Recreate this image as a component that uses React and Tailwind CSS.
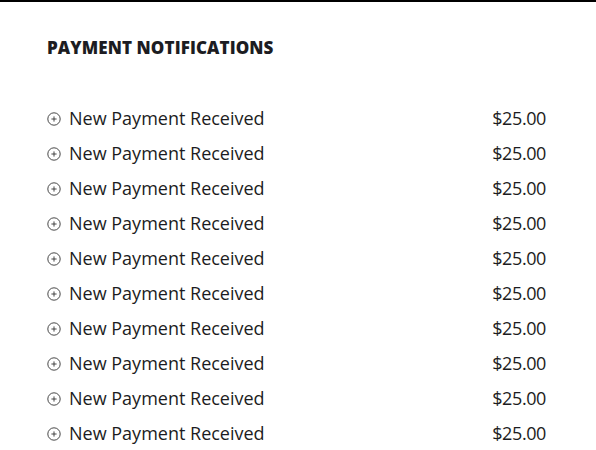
import React from "react";

const rows = Array.from({ length: 10 }, () => ({
  label: "New Payment Received",
  amount: "$25.00",
}));

function PlusCircle() {
  return (
    <svg width="14" height="14" viewBox="0 0 14 14" className="shrink-0 text-[#333]">
      <circle cx="7" cy="7" r="6.2" fill="none" stroke="currentColor" strokeWidth="0.9" />
      <path d="M7 4.4v5.2M4.4 7h5.2" stroke="currentColor" strokeWidth="0.9" />
    </svg>
  );
}

export default function App() {
  return (
    <div
      className="min-h-[450px] w-full overflow-hidden border-t-2 border-black bg-white text-[#1c1c22]"
      style={{ fontFamily: '"Open Sans", "Noto Sans", sans-serif' }}
    >
      <div className="px-[47px] pt-[34px]">
        <h1 className="text-[17px] font-extrabold uppercase leading-6 tracking-[0.1px]">
          Payment Notifications
        </h1>
        <ul className="mt-[41px] pr-[3px]">
          {rows.map((r, i) => (
            <li key={i} className="flex h-[35px] items-center justify-between">
              <div className="flex items-center gap-[8px]">
                <PlusCircle />
                <span className="text-[18px]">{r.label}</span>
              </div>
              <span className="text-[18px] tracking-[-0.4px]">{r.amount}</span>
            </li>
          ))}
        </ul>
      </div>
    </div>
  );
}
